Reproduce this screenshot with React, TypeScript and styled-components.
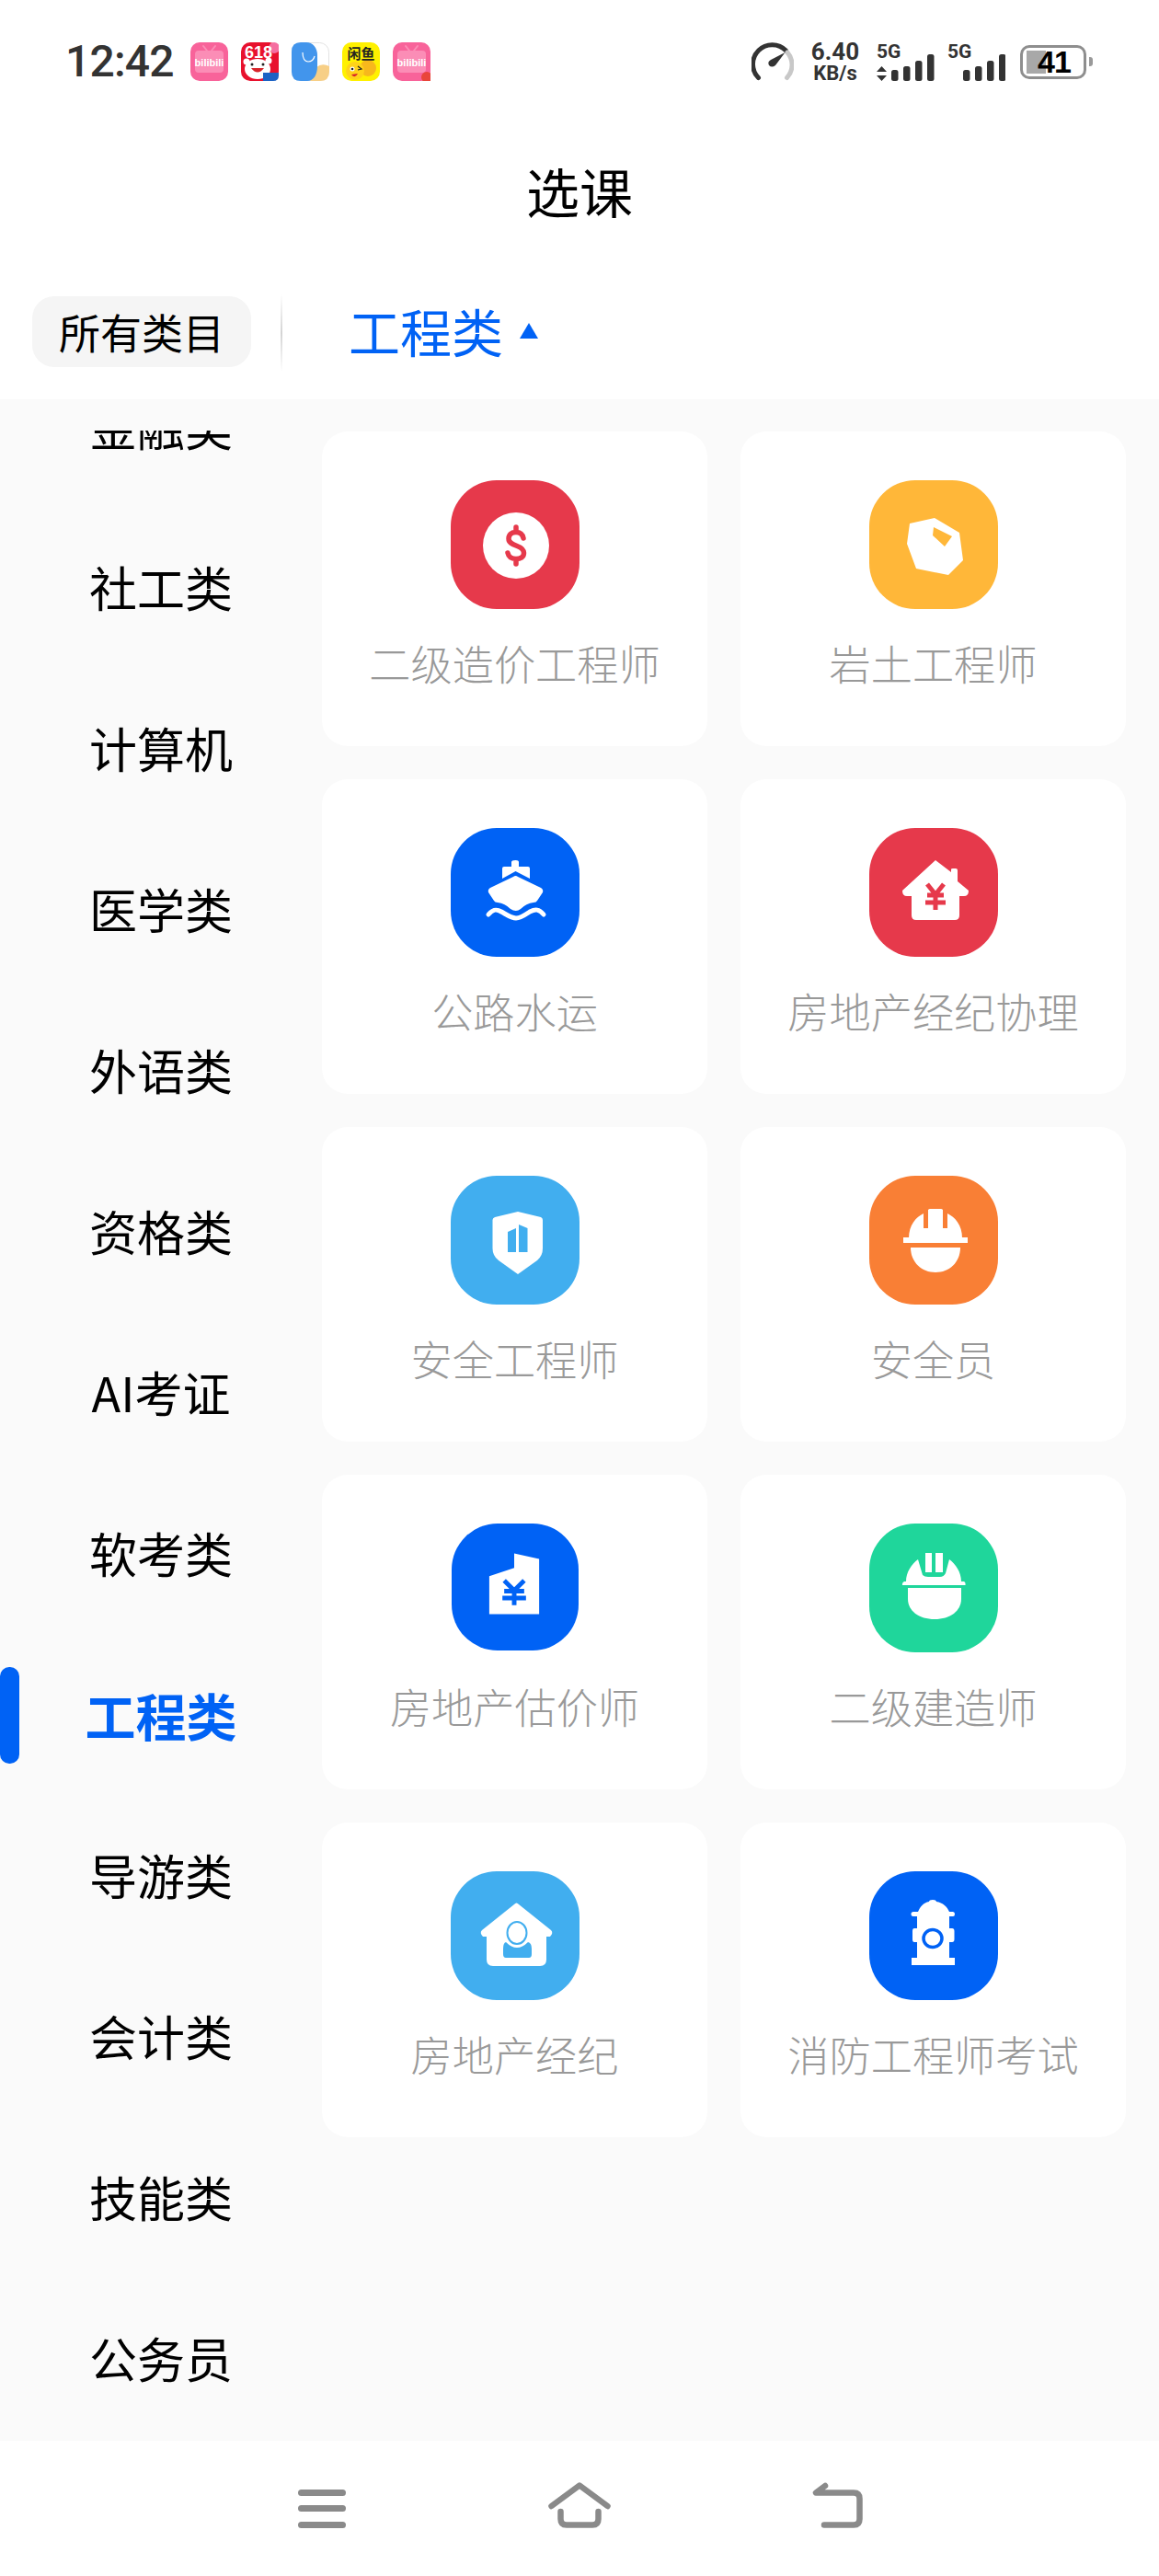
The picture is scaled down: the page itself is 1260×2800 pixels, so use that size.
import React from 'react'
import styled, { createGlobalStyle } from 'styled-components'

const BLUE = '#0062f5'
const RED = '#e6394b'
const AMBER = '#ffb739'
const SKY = '#41aeef'
const ORANGE = '#f97f35'
const GREEN = '#1fd69b'

const GlobalStyle = createGlobalStyle`
  html, body {
    margin: 0;
    padding: 0;
    background: #fff;
    font-family: "Noto Sans CJK SC", "Noto Sans", sans-serif;
  }
`

const Page = styled.div`
  width: 1260px;
  height: 2800px;
  display: flex;
  flex-direction: column;
  background: #fff;
  overflow: hidden;
`

const StatusBar = styled.div`
  height: 134px;
  flex: none;
  display: flex;
  align-items: center;
  padding: 0 72px 0 71px;
  box-sizing: border-box;
`
const Clock = styled.div`
  font-family: Roboto, sans-serif;
  font-size: 48px;
  font-weight: 500;
  line-height: 48px;
  letter-spacing: -0.8px;
  color: #333;
  width: 116px;
  white-space: nowrap;
`
const AppIcons = styled.div`
  display: flex;
  gap: 14px;
  margin-left: 20px;
`
const AppIconBox = styled.svg`
  width: 41px;
  height: 42px;
  display: block;
`
const StatusRight = styled.div`
  margin-left: auto;
  display: flex;
  align-items: center;
`
const Speed = styled.div`
  width: 54px;
  margin: 0 18px;
  display: flex;
  flex-direction: column;
  align-items: center;
  font-family: Roboto, sans-serif;
  color: #333;
  font-weight: 700;
  white-space: nowrap;
`
const SpeedValue = styled.span`
  font-size: 26px;
  line-height: 25px;
`
const SpeedUnit = styled.span`
  font-size: 22px;
  line-height: 22px;
`
const Signal = styled.div`
  width: 63px;
  height: 42px;
  display: grid;
  margin-right: ${p => p.$gap}px;
`
const SignalLabel = styled.span`
  grid-area: 1 / 1;
  font-family: Roboto, sans-serif;
  font-size: 21px;
  line-height: 20px;
  font-weight: 700;
  color: #333;
`
const SignalBars = styled.svg`
  grid-area: 1 / 1;
  width: 63px;
  height: 42px;
  display: block;
`
const Battery = styled.div`
  display: flex;
  align-items: center;
  gap: 3px;
`
const BatteryBody = styled.div`
  width: 72px;
  height: 37px;
  box-sizing: border-box;
  border: 3px solid #8e8e8e;
  border-radius: 10px;
  background: linear-gradient(#a8a8a8, #a8a8a8) 4px 3px / 21px 25px no-repeat;
  display: flex;
  align-items: center;
  justify-content: center;
  font-family: "Liberation Sans", sans-serif;
  font-size: 34px;
  font-weight: 700;
  color: #000;
  letter-spacing: -1px;
  padding-left: 2px;
`
const BatteryTip = styled.div`
  width: 4px;
  height: 10px;
  background: #999;
  border-radius: 0 3px 3px 0;
`

const TitleBar = styled.div`
  height: 150px;
  flex: none;
  box-sizing: border-box;
  padding-bottom: 4px;
  display: flex;
  align-items: center;
  justify-content: center;
  font-size: 58px;
  color: #000;
`

const TabRow = styled.div`
  height: 150px;
  flex: none;
  box-sizing: border-box;
  padding: 38px 0 0 35px;
  display: flex;
  align-items: flex-start;
`
const AllChip = styled.div`
  width: 238px;
  height: 77px;
  border-radius: 24px;
  background: #f5f5f5;
  display: flex;
  align-items: center;
  justify-content: center;
  font-size: 45px;
  color: #000;
`
const TabDivider = styled.div`
  width: 2px;
  height: 84px;
  margin: -2px 0 0 32px;
  background: linear-gradient(rgba(210, 210, 210, 0), #d4d4d4 50%, rgba(210, 210, 210, 0));
`
const ActiveTab = styled.div`
  margin-left: 72px;
  height: 72px;
  display: flex;
  align-items: center;
  gap: 18px;
  font-size: 56px;
  color: ${BLUE};
`
const Caret = styled.span`
  width: 0;
  height: 0;
  border-left: 10px solid transparent;
  border-right: 10px solid transparent;
  border-bottom: 17px solid ${BLUE};
  margin-top: 2px;
`

const Body = styled.div`
  flex: 1;
  display: flex;
  min-height: 0;
  background: #fafafa;
`
const Sidebar = styled.div`
  width: 350px;
  flex: none;
  margin-top: 34px;
  overflow: hidden;
`
const SideList = styled.div`
  margin-top: -93px;
`
const SideItem = styled.div`
  position: relative;
  height: 175px;
  display: flex;
  align-items: center;
  justify-content: center;
  font-size: ${p => (p.$active ? 55 : 52)}px;
  font-weight: ${p => (p.$active ? 700 : 400)};
  color: ${p => (p.$active ? BLUE : '#000')};
`
const ActiveBar = styled.span`
  position: absolute;
  left: 0;
  top: 37px;
  width: 21px;
  height: 105px;
  border-radius: 10px;
  background: ${BLUE};
`
const CardGrid = styled.div`
  display: grid;
  grid-template-columns: 419px 419px;
  grid-auto-rows: 342px;
  gap: 36px;
  padding-top: 35px;
  align-content: start;
`
const Card = styled.div`
  background: #fff;
  border-radius: 28px;
  display: flex;
  flex-direction: column;
  align-items: center;
  padding-top: 53px;
  box-sizing: border-box;
`
const Badge = styled.div`
  width: ${p => (p.$small ? 138 : 140)}px;
  height: ${p => (p.$small ? 138 : 140)}px;
  margin-bottom: ${p => (p.$small ? 2 : 0)}px;
  border-radius: 50px;
  background: ${p => p.$color};
  flex: none;
`
const BadgeArt = styled.svg`
  width: 100%;
  height: 100%;
  display: block;
`
const CardLabel = styled.div`
  margin-top: 29px;
  font-size: 45.2px;
  line-height: 60px;
  font-weight: 300;
  color: #999;
  white-space: nowrap;
`

const NavBar = styled.div`
  height: 147px;
  flex: none;
  box-sizing: border-box;
  padding: 45px 0 0 324px;
  display: flex;
  align-items: flex-start;
  background: #fff;
`
const NavIcon = styled.svg`
  height: 50px;
  display: block;
  margin-right: ${p => p.$gap}px;
`

const Art = ({ children }: { children: React.ReactNode }) => (
  <BadgeArt viewBox="0 0 140 140">{children}</BadgeArt>
)

const Yen = ({ x, y, w, h, color }: { x: number; y: number; w: number; h: number; color: string }) => {
  const cx = x + w / 2
  return (
    <path
      d={`M${x + 2} ${y + 1}L${cx} ${y + h * 0.42}L${x + w - 2} ${y + 1}M${cx} ${y + h * 0.42}V${y + h}M${x + 2} ${y + h * 0.45}H${x + w - 2}M${x} ${y + h * 0.72}H${x + w}`}
      fill="none"
      stroke={color}
      strokeWidth={5}
    />
  )
}

const DollarArt = () => (
  <Art>
    <circle cx={71} cy={71} r={36} fill="#fff" />
    <path
      d="M79 63C78 58 75 56.500 71 56.500C66 56.500 63 59 63 63.500C63 68 67 69.500 71 71C75 72.500 79.500 74.500 79.500 79C79.500 83.500 76 85.500 71 85.500C66.500 85.500 63 83.500 62 79M71 51V56M71 86V91"
      fill="none"
      stroke={RED}
      strokeWidth={5.500}
      strokeLinecap="round"
    />
  </Art>
)
const RockArt = () => (
  <Art>
    <path
      fillRule="evenodd"
      d="M44 47L71 41L98 57L102 87L86 103L51 96L41 69ZM70 51L90 61L82 72L69 60Z"
      fill="#fff"
    />
  </Art>
)
const ShipArt = () => (
  <Art>
    <path
      d="M66 42V37Q66 35 70.5 35Q74 35 74 37V42H84Q86 42 86 44V55L70.5 47L56 55V44Q56 42 58 42Z"
      fill="#fff"
    />
    <path
      d="M68 53Q70.5 51 73 53L98 65Q101 67 100 70L94 79Q93 81 90 81Q82 82 76 88Q71 92 65 88Q59 82 51 81Q48 81 47 79L41 70Q40 67 43 65Z"
      fill="#fff"
    />
    <path
      d="M41 94C46 88 50 88 55 91C62 95 66 98 71 98C76 98 80 95 86 91C92 88 96 88 101 94"
      fill="none"
      stroke="#fff"
      strokeWidth={5}
      strokeLinecap="round"
    />
  </Art>
)
const YenHouseArt = () => (
  <Art>
    <path
      d="M72 35L89 48V45Q89 44 91 44H94Q96 44 96 46V58L108 68Q108 74 103 74H98V95Q98 100 93 100H51Q46 100 46 95V74H41Q36 74 36 68Z"
      fill="#fff"
    />
    <Yen x={61} y={60} w={22} h={29} color={RED} />
  </Art>
)
const ShieldArt = () => (
  <Art>
    <path
      d="M73 39L98 45Q100 46 100 48V79Q100 87 94 92L73 107L52 92Q45.500 87 45.500 79V48Q45.500 46 48 45Z"
      fill="#fff"
    />
    <path d="M62 61L71 57V83H62ZM74 53L83.500 57V83H74Z" fill={SKY} />
  </Art>
)
const HelmetArt = () => (
  <Art>
    <path d="M43 68C43 53 51 45 59 41L64 37Q72 35 80 37L85 41C93 45 101 53 101 68Z" fill="#fff" />
    <path d="M59 36H64V57H59ZM80 36H85V57H80Z" fill={ORANGE} />
    <rect x={64} y={36} width={16} height={6} rx={2} fill="#fff" />
    <rect x={37} y={67} width={70} height={6} fill="#fff" />
    <path d="M45 78H99C99 94 87 105 72 105C57 105 45 94 45 78Z" fill="#fff" />
  </Art>
)
const YenBuildingArt = () => (
  <Art>
    <path d="M41.500 58L69 49V33L96.500 39V100H41.500Z" fill="#fff" />
    <Yen x={56} y={62} w={26} h={28} color={BLUE} />
  </Art>
)
const GreenHelmetArt = () => (
  <Art>
    <path
      d="M40 63C40 53 46 44 53 39L58 56Q60 58 64 58H77Q81 58 83 54L87 39C94 44 100 53 100 63H103Q105 64 104.500 67H36Q35.500 64 38 63Z"
      fill="#fff"
    />
    <path d="M61 32H68V53H61ZM72 32H80V53H72Z" fill="#fff" />
    <path d="M42 70H100V82C100 95 88 104 71 104C54 104 42 95 42 82Z" fill="#fff" />
  </Art>
)
const PersonHouseArt = () => (
  <Art>
    <path
      d="M69 36Q71.500 33 74 36L109 64Q112 67 108 71H104V96Q104 103 97 103H46Q39 103 39 96V71H35Q31 67 34 64Z"
      fill="#fff"
    />
    <ellipse cx={72} cy={67} rx={10.500} ry={12} fill="#fff" stroke={SKY} strokeWidth={2} />
    <path
      d="M57 90V84Q57 78 60 77Q66 83 72 83Q78 83 84 77Q88 78 88 84V90Q88 94 85 94H60Q57 94 57 90Z"
      fill={SKY}
    />
  </Art>
)
const HydrantArt = () => (
  <Art>
    <path
      d="M65 33Q65 31 69 31Q73 31 73 33C80 34 85 39 87 44H91Q93 44 93 46.500Q93 49 91 49H87V62H90Q92.500 62 92.500 65V74Q92.500 77 90 77H87V94H93V102H46V94H52V77H49Q47 77 47 74V65Q47 62 49 62H52V49H48Q45.500 49 45.500 46.500Q45.500 44 48 44H53C55 39 59 34 65 33Z"
      fill="#fff"
    />
    <ellipse cx={69} cy={73} rx={10} ry={9.500} fill="#fff" stroke={BLUE} strokeWidth={3.500} />
  </Art>
)

const courses = [
  { name: '二级造价工程师', color: RED, art: <DollarArt /> },
  { name: '岩土工程师', color: AMBER, art: <RockArt /> },
  { name: '公路水运', color: BLUE, art: <ShipArt /> },
  { name: '房地产经纪协理', color: RED, art: <YenHouseArt /> },
  { name: '安全工程师', color: SKY, art: <ShieldArt /> },
  { name: '安全员', color: ORANGE, art: <HelmetArt /> },
  { name: '房地产估价师', color: BLUE, art: <YenBuildingArt />, small: true },
  { name: '二级建造师', color: GREEN, art: <GreenHelmetArt /> },
  { name: '房地产经纪', color: SKY, art: <PersonHouseArt /> },
  { name: '消防工程师考试', color: BLUE, art: <HydrantArt /> },
]

const categories = [
  '金融类',
  '社工类',
  '计算机',
  '医学类',
  '外语类',
  '资格类',
  'AI考证',
  '软考类',
  '工程类',
  '导游类',
  '会计类',
  '技能类',
  '公务员',
]

const BiliIcon = ({ badge }: { badge?: boolean }) => (
  <AppIconBox viewBox="0 0 41 42">
    <rect width={41} height={42} rx={10} fill="#f8639a" />
    <path d="M14 4L18 9M27 4L23 9" stroke="#fb8db6" strokeWidth={2} strokeLinecap="round" />
    <rect x={5} y={9} width={31} height={24} rx={4} fill="#fb8db6" />
    <text
      x={20.5}
      y={26}
      textAnchor="middle"
      fontSize={11}
      fontWeight={700}
      fill="#fff"
      fontFamily="Liberation Sans, sans-serif"
    >
      bilibili
    </text>
    {badge && <circle cx={37} cy={38} r={6} fill="#e9453a" />}
  </AppIconBox>
)
const TaobaoIcon = () => (
  <AppIconBox viewBox="0 0 41 42">
    <rect width={41} height={42} rx={10} fill="#e8112d" />
    <circle cx={36} cy={6} r={6} fill="#f56fa0" />
    <text
      x={19}
      y={17}
      textAnchor="middle"
      fontSize={18}
      fontWeight={700}
      fill="#fff"
      fontFamily="Liberation Sans, sans-serif"
    >
      618
    </text>
    <ellipse cx={18} cy={29} rx={14} ry={11} fill="#fff" />
    <circle cx={6} cy={21} r={3.500} fill="#fff" />
    <circle cx={30} cy={20} r={3.500} fill="#fff" />
    <path d="M11 28Q18 37 25 28Z" fill="#d8232a" />
    <circle cx={12} cy={24} r={1.500} fill="#222" />
    <circle cx={24} cy={24} r={1.500} fill="#222" />
    <path d="M24 33H41V36Q41 42 35 42H24Z" fill="#1c62c4" />
  </AppIconBox>
)
const BrowserIcon = () => (
  <AppIconBox viewBox="0 0 41 42">
    <rect x={0.500} y={0.500} width={40} height={41} rx={10} fill="#fff" stroke="#e2e2e2" />
    <path d="M27 27Q33 22 41 26V32Q41 42 31 42H20Z" fill="#f7cf86" />
    <path d="M10 0H16C23 0 28 6 28 14V26C28 35 24 42 17 42H10Q0 42 0 32V10Q0 0 10 0Z" fill="#4295ec" />
    <path d="M12 11C12 17 14 21 18 21C22 21 24 19 25 15" fill="none" stroke="#fff" strokeWidth={1.200} />
  </AppIconBox>
)
const XianyuIcon = () => (
  <AppIconBox viewBox="0 0 41 42">
    <rect width={41} height={42} rx={10} fill="#fff100" />
    <circle cx={28} cy={28} r={9} fill="#f7b81c" />
    <text
      x={20.500}
      y={18}
      textAnchor="middle"
      fontSize={15}
      fontWeight={700}
      fill="#222"
      fontFamily="Noto Sans CJK SC, sans-serif"
    >
      闲鱼
    </text>
    <circle cx={14} cy={31} r={10} fill="#ffd31a" />
    <circle cx={11} cy={29} r={2.500} fill="#fff" />
    <circle cx={11} cy={29} r={1.300} fill="#222" />
    <path d="M17 26L21 29L17 30" fill="none" stroke="#222" strokeWidth={1.200} />
    <path d="M10 35Q14 40 17 34Z" fill="#d8232a" />
  </AppIconBox>
)

const Gauge = () => (
  <svg width={46} height={42} viewBox="0 0 46 42">
    <path d="M7.500 38.500A20.500 20.500 0 0 1 37.500 9" fill="none" stroke="#333" strokeWidth={5} strokeLinecap="round" />
    <path d="M39 11A20.500 20.500 0 0 1 38.500 38.500" fill="none" stroke="#c8c8c8" strokeWidth={5} strokeLinecap="round" />
    <path d="M36.500 11L26 25Q22 28 19 25Q17 21 21 19Z" fill="#333" />
  </svg>
)

const Bars = ({ arrows, offset }: { arrows?: boolean; offset: number }) => (
  <SignalBars viewBox="0 0 63 42">
    {arrows && <path d="M5.500 26L11 32H0ZM5.500 42L0 36H11Z" fill="#333" />}
    {[
      [0, 30],
      [13, 26],
      [26, 20],
      [39, 13],
    ].map(([dx, top]) => (
      <rect key={dx} x={offset + dx} y={top} width={7.500} height={42 - top} rx={2.500} fill="#333" />
    ))}
  </SignalBars>
)

const App = () => (
  <Page>
    <GlobalStyle />
    <StatusBar>
      <Clock>12:42</Clock>
      <AppIcons>
        <BiliIcon />
        <TaobaoIcon />
        <BrowserIcon />
        <XianyuIcon />
        <BiliIcon badge />
      </AppIcons>
      <StatusRight>
        <Gauge />
        <Speed>
          <SpeedValue>6.40</SpeedValue>
          <SpeedUnit>KB/s</SpeedUnit>
        </Speed>
        <Signal $gap={14}>
          <SignalLabel>5G</SignalLabel>
          <Bars arrows offset={16} />
        </Signal>
        <Signal $gap={16}>
          <SignalLabel>5G</SignalLabel>
          <Bars offset={17} />
        </Signal>
        <Battery>
          <BatteryBody>41</BatteryBody>
          <BatteryTip />
        </Battery>
      </StatusRight>
    </StatusBar>

    <TitleBar>选课</TitleBar>

    <TabRow>
      <AllChip>所有类目</AllChip>
      <TabDivider />
      <ActiveTab>
        工程类
        <Caret />
      </ActiveTab>
    </TabRow>

    <Body>
      <Sidebar>
        <SideList>
          {categories.map(name => (
            <SideItem key={name} $active={name === '工程类'}>
              {name === '工程类' && <ActiveBar />}
              {name}
            </SideItem>
          ))}
        </SideList>
      </Sidebar>
      <CardGrid>
        {courses.map(course => (
          <Card key={course.name}>
            <Badge $color={course.color} $small={course.small}>
              {course.art}
            </Badge>
            <CardLabel>{course.name}</CardLabel>
          </Card>
        ))}
      </CardGrid>
    </Body>

    <NavBar>
      <NavIcon $gap={220} viewBox="0 0 52 50" width={52}>
        <rect x={0} y={8} width={52} height={7} rx={3.500} fill="#8a8a8a" />
        <rect x={0} y={25} width={52} height={7} rx={3.500} fill="#8a8a8a" />
        <rect x={0} y={43} width={52} height={7} rx={3.500} fill="#8a8a8a" />
      </NavIcon>
      <NavIcon $gap={218} viewBox="0 0 68 50" width={68}>
        <path
          d="M3.500 26L34 3.500L64.500 26M13.500 32V40Q13.500 46.500 20 46.500H48Q54.500 46.500 54.500 40V32"
          fill="none"
          stroke="#8a8a8a"
          strokeWidth={6.500}
          strokeLinecap="round"
          strokeLinejoin="round"
        />
      </NavIcon>
      <NavIcon $gap={0} viewBox="0 0 56 50" width={56}>
        <path
          d="M15 4L5 11.500H46Q52.500 11.500 52.500 18V40Q52.500 46.500 46 46.500H14"
          fill="none"
          stroke="#8a8a8a"
          strokeWidth={6.500}
          strokeLinecap="round"
          strokeLinejoin="round"
        />
      </NavIcon>
    </NavBar>
  </Page>
)

export default App
